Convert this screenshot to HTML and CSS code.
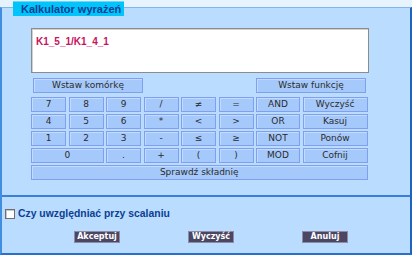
FILE: index.html
```html
<!DOCTYPE html>
<html lang="pl">
<head>
  <meta charset="UTF-8">
  <title>Kalkulator wyrażeń</title>
  <link rel="stylesheet" href="styles.css">
</head>
<body>
  <div class="window">
    <div class="tab-title">Kalkulator wyrażeń</div>

    <div class="calc">
      <div class="expr">K1_5_1/K1_4_1</div>

      <div class="insert-row">
        <button class="key insert">Wstaw komórkę</button>
        <button class="key insert">Wstaw funkcję</button>
      </div>

      <div class="keypad">
        <button class="key">7</button>
        <button class="key">8</button>
        <button class="key">9</button>
        <button class="key">/</button>
        <button class="key">≠</button>
        <button class="key">=</button>
        <button class="key">AND</button>
        <button class="key">Wyczyść</button>

        <button class="key">4</button>
        <button class="key">5</button>
        <button class="key">6</button>
        <button class="key">*</button>
        <button class="key">&lt;</button>
        <button class="key">&gt;</button>
        <button class="key">OR</button>
        <button class="key">Kasuj</button>

        <button class="key">1</button>
        <button class="key">2</button>
        <button class="key">3</button>
        <button class="key">-</button>
        <button class="key">≤</button>
        <button class="key">≥</button>
        <button class="key">NOT</button>
        <button class="key">Ponów</button>

        <button class="key span-2">0</button>
        <button class="key">.</button>
        <button class="key">+</button>
        <button class="key">(</button>
        <button class="key">)</button>
        <button class="key">MOD</button>
        <button class="key">Cofnij</button>

        <button class="key span-all">Sprawdź składnię</button>
      </div>
    </div>

    <div class="options">
      <label class="check">
        <span class="box"></span>
        Czy uwzględniać przy scalaniu
      </label>
      <div class="actions">
        <button class="action">Akceptuj</button>
        <button class="action">Wyczyść</button>
        <button class="action">Anuluj</button>
      </div>
    </div>
  </div>
</body>
</html>
```

FILE: styles.css
```css
body {
  margin: 0;
  background-color: #e6f3fd;
  font-family: "Liberation Sans", Arial, sans-serif;
}

.window {
  position: relative;
  margin-top: 7px;
  height: 248px;
  box-sizing: border-box;
  background-color: #b9dcff;
  border-top: 1px solid #7fb4ec;
  border-left: 2px solid #3f8ee2;
  border-right: 2px solid #1d63bf;
  border-bottom: 2px solid #2a6fcc;
}

.tab-title {
  position: absolute;
  top: -7px;
  left: 11px;
  width: 111px;
  height: 15px;
  box-sizing: border-box;
  padding-left: 8px;
  background-color: #00c4fa;
  border-top: 1px solid #6ad8fb;
  color: #0d3f93;
  font-size: 11px;
  font-weight: bold;
  line-height: 14px;
  white-space: nowrap;
}

.calc {
  padding: 20px 0 15px 29px;
  border-bottom: 2px solid #3a80d8;
}

.expr {
  width: 338px;
  height: 45px;
  box-sizing: border-box;
  padding: 7px 4px;
  background-color: #fff;
  border: 1px solid #8c8c8c;
  box-shadow: inset 1px 1px 0 #d0d0d0;
  color: #c8125e;
  font-size: 10px;
  font-weight: bold;
}

.insert-row {
  display: flex;
  justify-content: space-between;
  width: 337px;
  box-sizing: border-box;
  padding: 0 2px;
  margin-top: 5px;
}

.key {
  height: 15px;
  padding: 0;
  background-color: #a6c9fb;
  border: 1px solid #819ff0;
  box-shadow: inset 1px 1px 0 #c2dbff;
  color: #2b2b2b;
  font-family: "DejaVu Sans", Verdana, sans-serif;
  font-size: 9px;
  line-height: 13px;
}

.key.insert {
  width: 110px;
}

.keypad {
  display: grid;
  grid-template-columns: repeat(6, 35px) 44px 65px;
  column-gap: 2.5px;
  row-gap: 2px;
  margin-top: 4px;
}

.span-2 {
  grid-column: span 2;
}

.span-all {
  grid-column: 1 / -1;
}

.options {
  padding: 11px 0 0 3px;
}

.check {
  display: flex;
  align-items: center;
  gap: 3px;
  color: #0d3f93;
  font-size: 10.4px;
  font-weight: bold;
}

.box {
  width: 10px;
  height: 10px;
  box-sizing: border-box;
  background-color: #fff;
  border: 1px solid #6e6e6e;
  box-shadow: inset 1px 1px 0 #c8c8c8;
}

.actions {
  display: flex;
  gap: 68px;
  margin: 12px 0 0 69px;
}

.action {
  width: 46px;
  height: 12px;
  padding: 0;
  background-color: #4b4662;
  border: 1px solid #8f8aa6;
  color: #fff;
  font-family: "DejaVu Sans", Verdana, sans-serif;
  font-size: 8px;
  font-weight: bold;
  line-height: 10px;
}
```
